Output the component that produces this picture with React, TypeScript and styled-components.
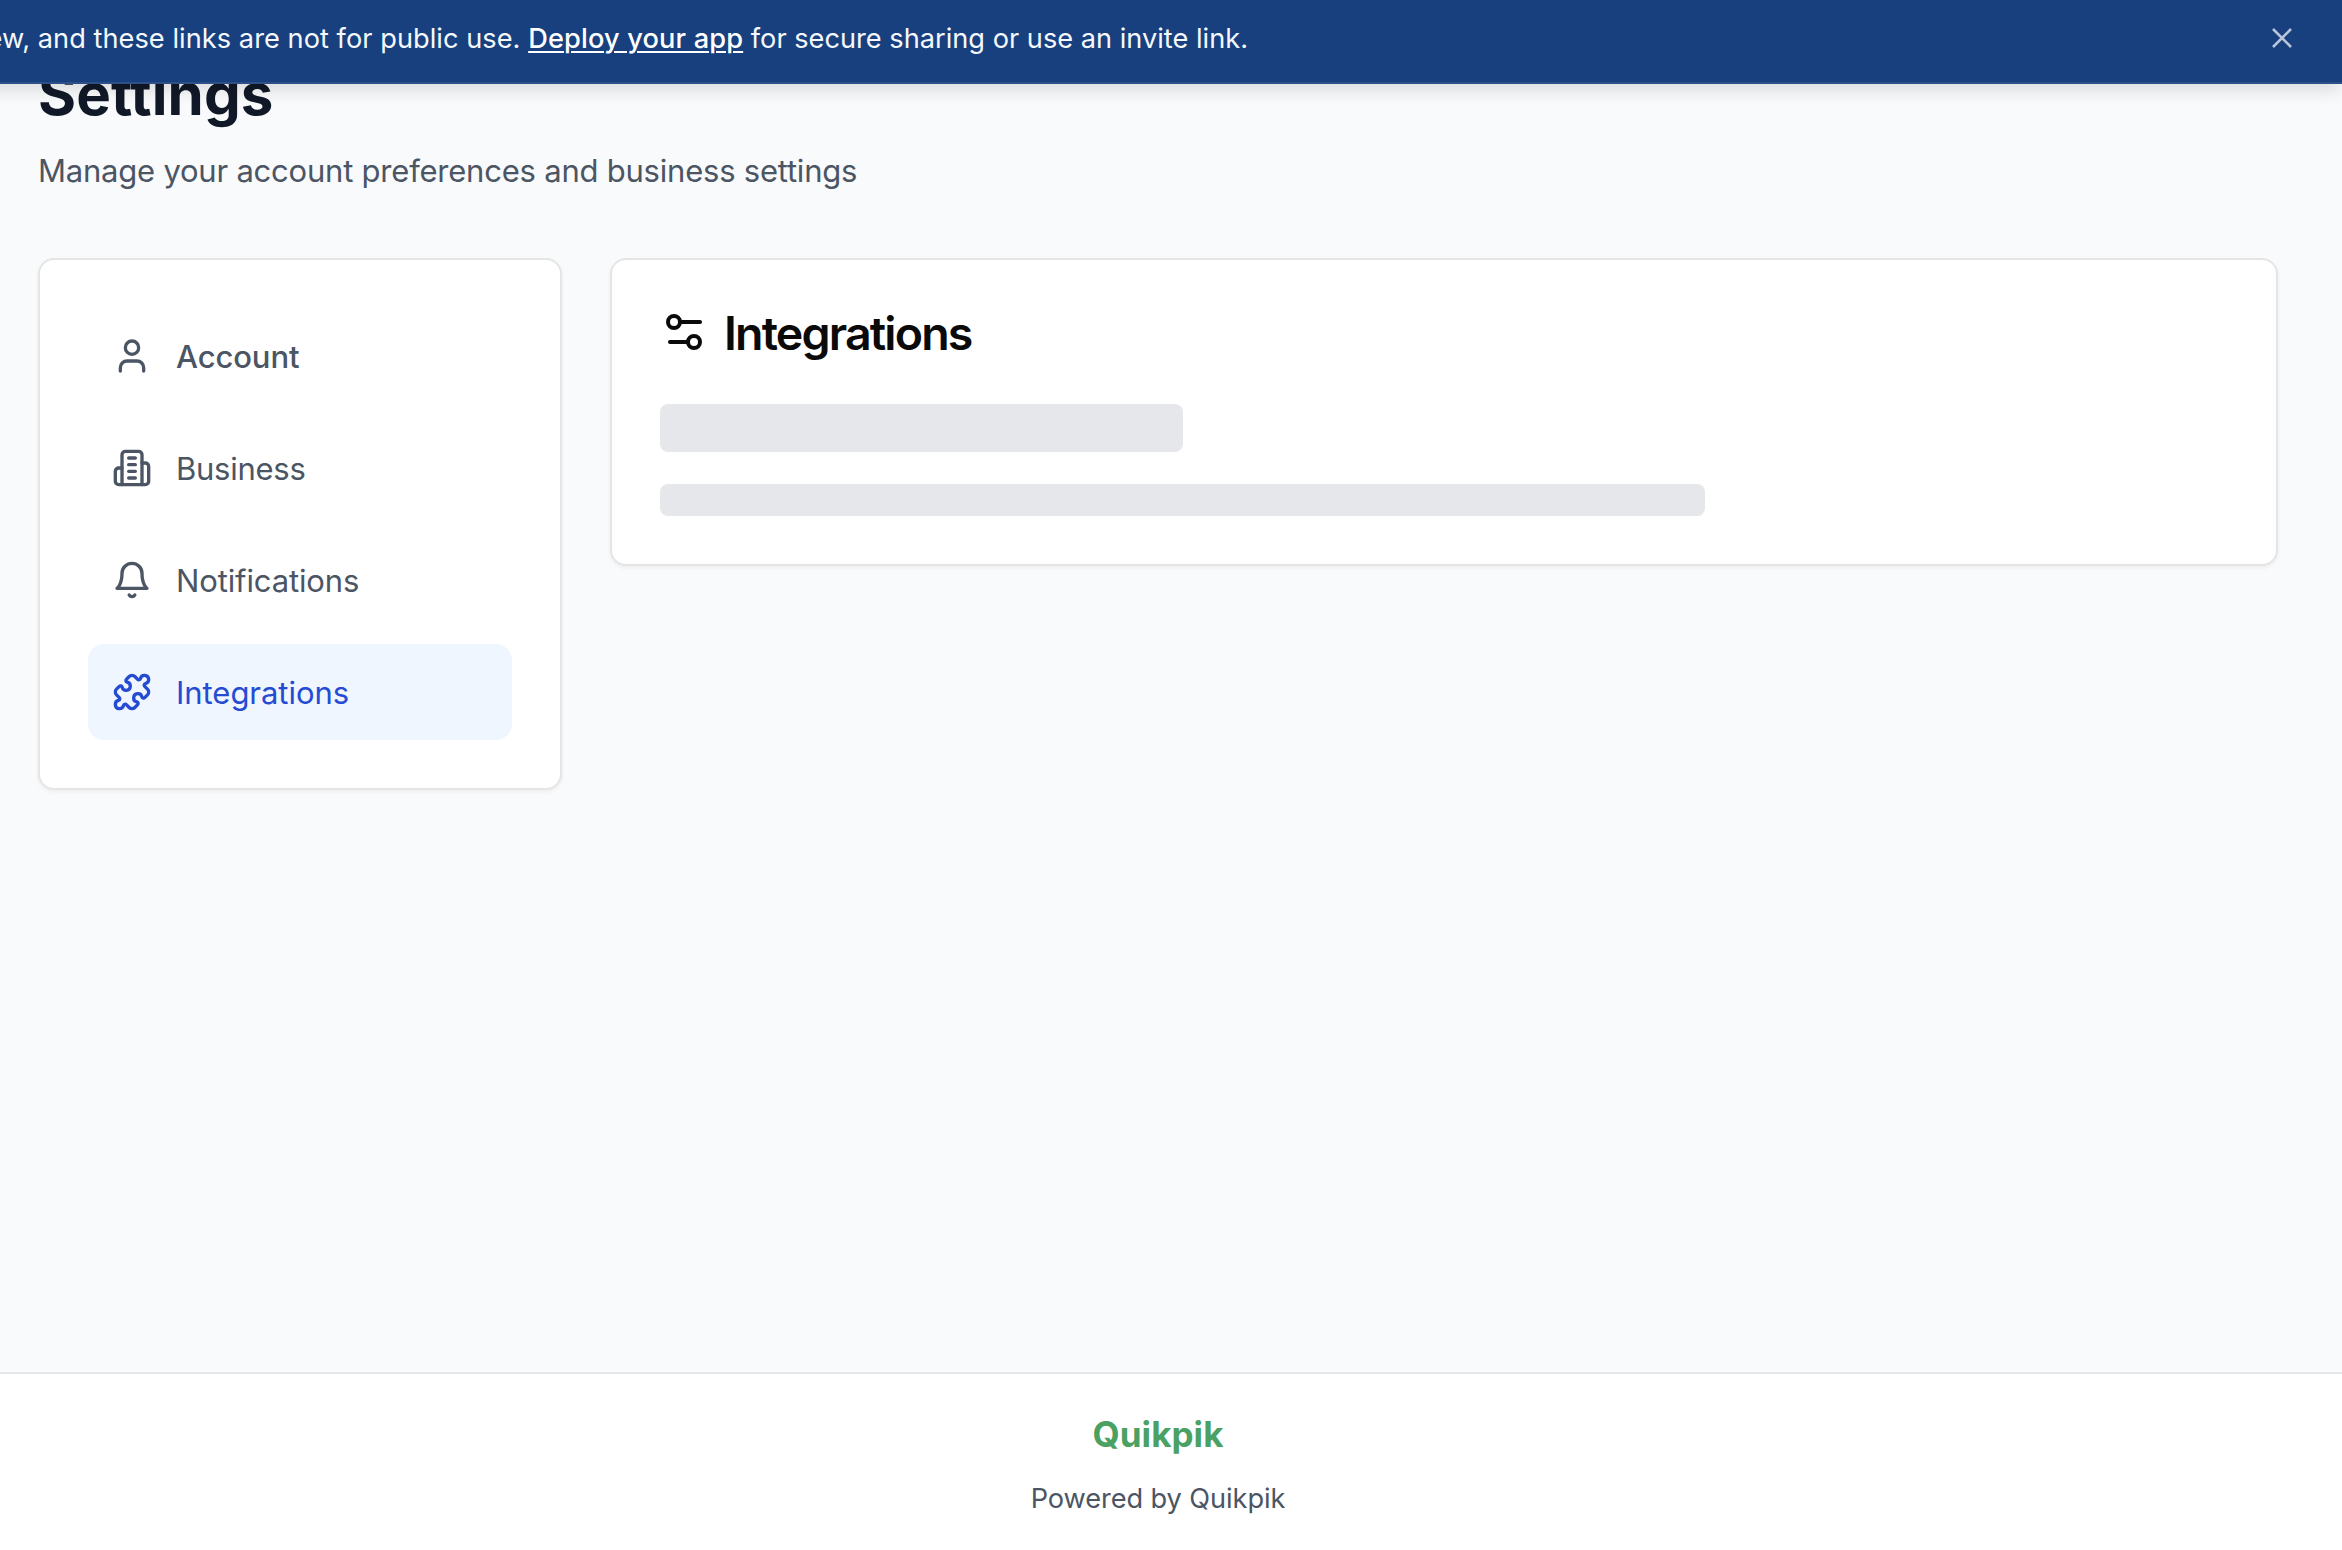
import React from 'react';
import styled, { createGlobalStyle } from 'styled-components';

const GlobalStyle = createGlobalStyle`
  *, *::before, *::after { box-sizing: border-box; }
  body {
    margin: 0;
    overflow: hidden;
    background: #f9fafb;
    font-family: Inter, "Liberation Sans", sans-serif;
  }
  h1, h2, p { margin: 0; }
`;

const Page = styled.div`
  display: flex;
  flex-direction: column;
  height: 1550px;
  background: #f9fafb;
`;

const Banner = styled.header`
  position: relative;
  z-index: 2;
  flex: none;
  display: flex;
  align-items: flex-start;
  justify-content: space-between;
  height: 84px;
  margin-left: -40px;
  padding: 18px 48px 0 0;
  background: #18407e;
  border-bottom: 2px solid #2d5088;
  box-shadow: 0 8px 16px -2px rgba(0, 0, 0, 0.13);
`;

const BannerText = styled.p`
  display: flex;
  justify-content: flex-end;
  width: 1288px;
  padding-top: 1px;
  white-space: pre;
  font-size: 27.2px;
  line-height: 40px;
  color: #f5f8fc;
`;

const Run = styled.span<{ $spacing: string }>`
  letter-spacing: ${(p) => p.$spacing};
`;

const DeployLink = styled.a`
  font-weight: 500;
  color: #ffffff;
  text-decoration: underline;
  text-decoration-thickness: 2px;
  text-underline-offset: 3px;
  letter-spacing: 0.15px;
`;

const CloseButton = styled.button`
  display: flex;
  align-items: center;
  justify-content: center;
  width: 24px;
  height: 40px;
  padding: 0;
  border: 0;
  background: none;
  color: #bac6d8;
`;

const Main = styled.main`
  flex: 1;
  padding: 0 64px 0 38px;
  margin-top: -26px;
`;

const Title = styled.h1`
  font-size: 58.2px;
  line-height: 72px;
  font-weight: 700;
  letter-spacing: 0.1px;
  color: #111827;
`;

const Subtitle = styled.p`
  margin-top: 17px;
  margin-bottom: 63px;
  font-size: 31px;
  line-height: 48px;
  letter-spacing: -0.22px;
  color: #4b5563;
`;

const Columns = styled.div`
  display: grid;
  grid-template-columns: 524px 1668px;
  gap: 48px;
  align-items: start;
`;

const Card = styled.section`
  padding: 48px;
  background: #ffffff;
  border: 2px solid #e5e5e5;
  border-radius: 16px;
  box-shadow: 0 2px 4px rgba(0, 0, 0, 0.05);
`;

const Nav = styled.nav`
  display: flex;
  flex-direction: column;
  gap: 16px;
`;

const NavItem = styled.button<{ $active?: boolean }>`
  display: flex;
  align-items: center;
  gap: 24px;
  height: 96px;
  padding: 0 24px;
  border: 0;
  border-radius: 16px;
  font-family: inherit;
  text-align: left;
  color: ${(p) => (p.$active ? '#264bd3' : '#4b5563')};
  background: ${(p) => (p.$active ? '#eff6ff' : 'transparent')};
`;

const NavLabel = styled.span<{ $weight?: number; $spacing: string }>`
  padding-top: 2px;
  font-size: 31px;
  line-height: 48px;
  font-weight: ${(p) => p.$weight ?? 400};
  letter-spacing: ${(p) => p.$spacing};
`;

const CardHeader = styled.div`
  display: flex;
  align-items: center;
  gap: 16px;
  height: 48px;
  margin-bottom: 48px;
  color: #0a0a0a;
`;

const CardTitle = styled.h2`
  padding-top: 2px;
  font-size: 46.5px;
  line-height: 48px;
  font-weight: 600;
  letter-spacing: -1.83px;
`;

const Skeletons = styled.div`
  display: flex;
  flex-direction: column;
  gap: 32px;
`;

const Skeleton = styled.div<{ $width: string; $height: number }>`
  width: ${(p) => p.$width};
  height: ${(p) => p.$height}px;
  border-radius: 8px;
  background: #e5e7eb;
`;

const Footer = styled.footer`
  flex: none;
  display: flex;
  flex-direction: column;
  align-items: center;
  gap: 17px;
  height: 178px;
  padding: 32px 26px 0 0;
  background: #ffffff;
  border-top: 2px solid #e5e7eb;
`;

const Brand = styled.p`
  font-size: 35px;
  line-height: 56px;
  font-weight: 700;
  letter-spacing: 0.05px;
  color: #4aa163;
`;

const Powered = styled.p`
  font-size: 27.2px;
  line-height: 40px;
  letter-spacing: -0.08px;
  color: #4b5563;
`;

type IconProps = { size: number; children: React.ReactNode };

const Icon = ({ size, children }: IconProps) => (
  <svg
    width={size}
    height={size}
    viewBox="0 0 24 24"
    fill="none"
    stroke="currentColor"
    strokeWidth={2}
    strokeLinecap="round"
    strokeLinejoin="round"
  >
    {children}
  </svg>
);

const UserIcon = () => (
  <Icon size={40}>
    <path d="M19 21v-2a4 4 0 0 0-4-4H9a4 4 0 0 0-4 4v2" />
    <circle cx="12" cy="7" r="4" />
  </Icon>
);

const BuildingIcon = () => (
  <Icon size={40}>
    <path d="M6 22V4a2 2 0 0 1 2-2h8a2 2 0 0 1 2 2v18Z" />
    <path d="M6 12H4a2 2 0 0 0-2 2v6a2 2 0 0 0 2 2h2" />
    <path d="M18 9h2a2 2 0 0 1 2 2v9a2 2 0 0 1-2 2h-2" />
    <path d="M10 6h4" />
    <path d="M10 10h4" />
    <path d="M10 14h4" />
    <path d="M10 18h4" />
  </Icon>
);

const BellIcon = () => (
  <Icon size={40}>
    <path d="M6 8a6 6 0 0 1 12 0c0 7 3 9 3 9H3s3-2 3-9" />
    <path d="M10.3 21a1.94 1.94 0 0 0 3.4 0" />
  </Icon>
);

const PuzzleIcon = () => (
  <Icon size={40}>
    <path d="M15.39 4.39a1 1 0 0 0 1.68-.474 2.5 2.5 0 1 1 3.014 3.015 1 1 0 0 0-.474 1.68l1.683 1.682a2.414 2.414 0 0 1 0 3.414L19.61 15.39a1 1 0 0 1-1.68-.474 2.5 2.5 0 1 0-3.014 3.015 1 1 0 0 1 .474 1.68l-1.683 1.682a2.414 2.414 0 0 1-3.414 0L8.61 19.61a1 1 0 0 0-1.68.474 2.5 2.5 0 1 1-3.014-3.015 1 1 0 0 0 .474-1.68l-1.683-1.682a2.414 2.414 0 0 1 0-3.414L4.39 8.61a1 1 0 0 1 1.68.474 2.5 2.5 0 1 0 3.014-3.015 1 1 0 0 1-.474-1.68l1.683-1.682a2.414 2.414 0 0 1 3.414 0z" />
  </Icon>
);

const SlidersIcon = () => (
  <Icon size={48}>
    <path d="M20 7h-9" />
    <path d="M14 17H5" />
    <circle cx="17" cy="17" r="3" />
    <circle cx="7" cy="7" r="3" />
  </Icon>
);

export default function App() {
  return (
    <>
      <GlobalStyle />
      <Page>
        <Banner>
          <BannerText>
            <Run $spacing="0.04px">ew, and these links are not for public use. </Run>
            <DeployLink>Deploy your app</DeployLink>
            <Run $spacing="0px"> for secure sharing or use an invite link.</Run>
          </BannerText>
          <CloseButton aria-label="Close">
            <svg width="20" height="20" viewBox="0 0 20 20" fill="none" stroke="currentColor" strokeWidth="2.6">
              <path d="M1 1l18 18M19 1L1 19" />
            </svg>
          </CloseButton>
        </Banner>
        <Main>
          <Title>Settings</Title>
          <Subtitle>Manage your account preferences and business settings</Subtitle>
          <Columns>
            <Card>
              <Nav>
                <NavItem>
                  <UserIcon />
                  <NavLabel $weight={500} $spacing="-0.1px">Account</NavLabel>
                </NavItem>
                <NavItem>
                  <BuildingIcon />
                  <NavLabel $spacing="-0.25px">Business</NavLabel>
                </NavItem>
                <NavItem>
                  <BellIcon />
                  <NavLabel $spacing="-0.13px">Notifications</NavLabel>
                </NavItem>
                <NavItem $active>
                  <PuzzleIcon />
                  <NavLabel $spacing="-0.04px">Integrations</NavLabel>
                </NavItem>
              </Nav>
            </Card>
            <Card>
              <CardHeader>
                <SlidersIcon />
                <CardTitle>Integrations</CardTitle>
              </CardHeader>
              <Skeletons>
                <Skeleton $width="33.3333%" $height={48} />
                <Skeleton $width="66.6667%" $height={32} />
              </Skeletons>
            </Card>
          </Columns>
        </Main>
        <Footer>
          <Brand>Quikpik</Brand>
          <Powered>Powered by Quikpik</Powered>
        </Footer>
      </Page>
    </>
  );
}
